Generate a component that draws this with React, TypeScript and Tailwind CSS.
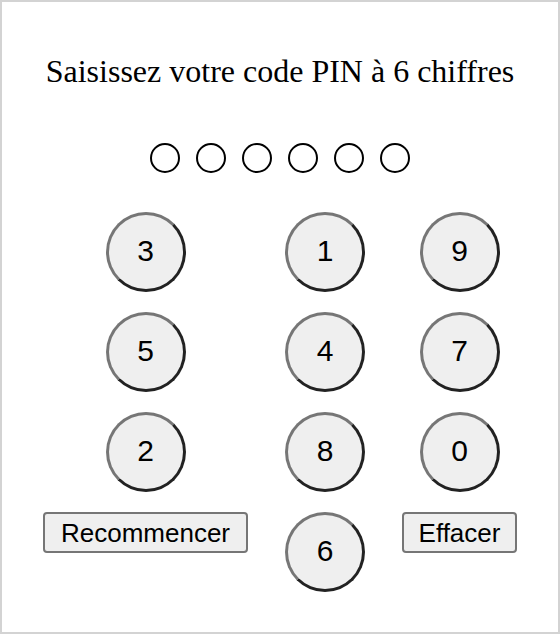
import React from "react";

const rows: string[][] = [
  ["3", "1", "9"],
  ["5", "4", "7"],
  ["2", "8", "0"],
];

function Key({ d }: { d: string }) {
  return (
    <button
      type="button"
      className="w-20 h-20 rounded-full bg-[#efefef] [border-width:3px] [border-style:solid] [border-color:#767676_#222222_#222222_#767676] text-[30px] text-black font-['Liberation_Sans',Arial,sans-serif] flex items-center justify-center leading-none pb-[2px]"
    >
      {d}
    </button>
  );
}

function TextButton({ label, w }: { label: string; w: string }) {
  return (
    <button
      type="button"
      className={`${w} h-[41px] rounded-[4px] bg-[#efefef] [border-width:2px] [border-style:solid] [border-color:#767676] text-[26px] text-black font-['Liberation_Sans',Arial,sans-serif] flex items-center justify-center leading-none`}
    >
      {label}
    </button>
  );
}

export default function App() {
  return (
    <div className="w-[560px] h-[634px] border-2 border-solid border-[#d3d3d3] bg-white flex flex-col items-center">
      <h1 className="mt-[51px] text-[32px] leading-[36px] font-normal text-black font-['Liberation_Serif','Times_New_Roman',serif] text-center">
        Saisissez votre code PIN à 6 chiffres
      </h1>
      <div className="mt-[54px] flex gap-[16px]">
        {Array.from({ length: 6 }).map((_, i) => (
          <div key={i} className="w-[30px] h-[30px] rounded-full border-2 border-solid border-black bg-white" />
        ))}
      </div>
      <div className="mt-[39px] grid grid-cols-[auto_auto_auto] justify-center justify-items-center items-start gap-x-[37px] gap-y-5">
        {rows.map((r) => r.map((d) => <Key key={d} d={d} />))}
        <TextButton label="Recommencer" w="w-[205px]" />
        <Key d="6" />
        <TextButton label="Effacer" w="w-[115px]" />
      </div>
    </div>
  );
}
